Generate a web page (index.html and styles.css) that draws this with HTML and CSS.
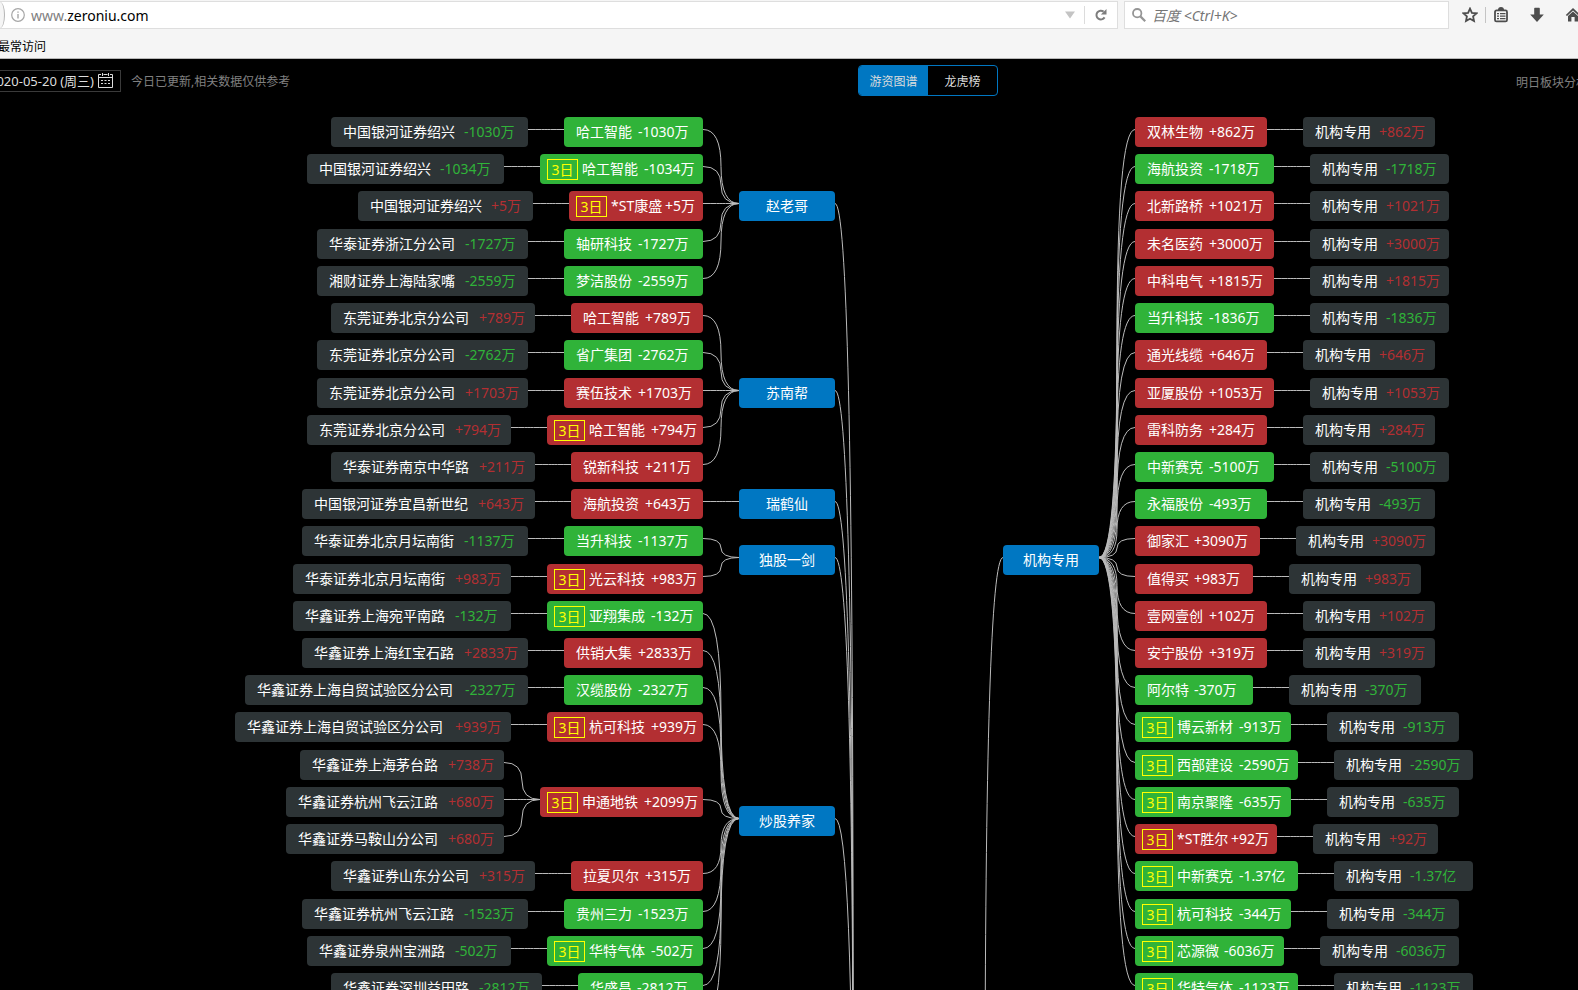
FILE: index.html
```html
<!DOCTYPE html>
<html lang="zh-CN">
<head>
    <meta charset="UTF-8">
    <title>游资图谱</title>
    <link rel="stylesheet" href="styles.css">
</head>
<body>
    <div class="browser">
        <div class="nav-bar">
            <div class="url-bar">
                <span class="back-edge"></span>
                <svg class="info" width="14" height="14" viewBox="0 0 14 14" fill="none" stroke="#a6a6a6">
                    <circle cx="7" cy="7" r="6.3" stroke-width="1.2"/>
                    <path d="M7 6v4.5M7 3.4v1.4" stroke-width="1.4"/>
                </svg>
                <label class="url-prefix" for="url">www.</label>
                <input class="url-input" id="url" type="text" value="zeroniu.com">
                <svg width="10" height="8" viewBox="0 0 10 8"><path d="M0 0.5h10L5 7.5z" fill="#c4c4c4"/></svg>
                <button class="reload" aria-label="刷新">
                    <svg width="12" height="12" viewBox="0 0 12 12">
                        <path d="M9.6 8.4A4.4 4.4 0 1 1 8.6 2.6" fill="none" stroke="#7d7d7d" stroke-width="2"/>
                        <path d="M11.5 0v5.6H5.9z" fill="#7d7d7d"/>
                    </svg>
                </button>
            </div>
            <div class="search-bar">
                <svg width="14" height="14" viewBox="0 0 14 14" fill="none" stroke="#959595">
                    <circle cx="5.2" cy="5.2" r="4.2" stroke-width="1.8"/>
                    <path d="M8.4 8.4l4.8 4.8" stroke-width="2.2"/>
                </svg>
                <input class="search-input" type="text" placeholder="百度 &lt;Ctrl+K&gt;" aria-label="搜索">
            </div>
            <div class="tools">
                <button aria-label="收藏">
                    <svg width="16" height="16" viewBox="0 0 16 16"><path d="M8 1.6l1.9 4.2 4.6.5-3.4 3.1.9 4.6L8 11.7 4 14l.9-4.6L1.5 6.3l4.6-.5z" fill="none" stroke="#4d4d4d" stroke-width="1.8"/></svg>
                </button>
                <span class="divider"></span>
                <button aria-label="书签">
                    <svg width="16" height="16" viewBox="0 0 16 16">
                        <path d="M5 3a3 3 0 0 1 6 0" fill="#4d4d4d"/>
                        <rect x="2" y="3.4" width="12" height="11" rx="1.5" fill="none" stroke="#4d4d4d" stroke-width="1.8"/>
                        <path d="M4 6.6h2M7 6.6h5.5M4 9.1h2M7 9.1h5.5M4 11.6h2M7 11.6h5.5" stroke="#4d4d4d" stroke-width="1.4"/>
                    </svg>
                </button>
                <button class="download" aria-label="下载">
                    <svg width="16" height="16" viewBox="0 0 16 16"><path d="M5.2 1.5q0-.7.7-.7h4.2q.7 0 .7.7v6h4L8 15 1.2 7.500h4z" fill="#4d4d4d"/></svg>
                </button>
                <button aria-label="主页">
                    <svg width="16" height="16" viewBox="0 0 16 16">
                        <path d="M8 1L.8 8l1.2 1L8 3.4 14 9l1.2-1z" fill="#4d4d4d"/>
                        <path d="M3 9l5-4.5L13 9v5.500H9.6V10H6.4v4.500H3z" fill="#4d4d4d"/>
                    </svg>
                </button>
            </div>
        </div>
        <div class="bookmarks"><a href="#">最常访问</a></div>
    </div>

    <header class="page-header">
        <div class="header-left">
            <button class="date">2020-05-20 (周三)
                <svg width="15" height="15" viewBox="0 0 15 15" fill="none" stroke="#ddd">
                    <path d="M3 1.5H.5v13h14v-13H12M5.500 1.500h4M4.500 0v3M10.500 0v3M.5 4.500h14"/>
                    <path d="M3 7.500h2M6.500 7.500h2M10 7.500h2M3 10.500h2M6.500 10.500h2M10 10.500h2"/>
                </svg>
            </button>
            <span class="notice">今日已更新,相关数据仅供参考</span>
        </div>
        <div class="tabs">
            <button class="active">游资图谱</button>
            <button>龙虎榜</button>
        </div>
        <div class="header-right"><a href="#">明日板块分析</a></div>
    </header>

    <main class="map" id="map">
        <svg class="edges" id="edges"></svg>
    </main>
    <script src="map.js"></script>
</body>
</html>
```

FILE: styles.css
```css
*{
    box-sizing: border-box;
}
html, body{
    margin: 0;
    height: 100%;
}
body{
    display: flex;
    flex-direction: column;
    overflow: hidden;
    background: #000;
    font-family: "Noto Sans", "Noto Sans CJK SC", sans-serif;
    font-size: 12px;
}
button, input{
    font: inherit;
    color: inherit;
    border: 0;
    padding: 0;
    margin: 0;
    background: none;
}
a{
    color: inherit;
    text-decoration: none;
}

/* browser bars */
.browser{
    flex: none;
    height: 59px;
    background: #f5f5f5;
    border-bottom: 1px solid #b8b8b8;
    color: #000;
}
.nav-bar{
    display: flex;
    height: 29px;
    padding-top: 1px;
}
.url-bar, .search-bar{
    display: flex;
    align-items: center;
    background: #fff;
    border: 1px solid #dedede;
    font-size: 14px;
}
.url-bar{
    flex: 1;
    border-left: 0;
    margin-right: 6px;

    .back-edge{
        width: 5px;
        height: 26px;
        background: #f5f5f5;
        border-right: 1px solid #b5b5b5;
        border-radius: 0 5px 5px 0 / 0 13px 13px 0;
    }
    .info{
        margin: 0 6px;
    }
    .url-prefix{
        color: #7f7f7f;
    }
    .url-input{
        flex: 1;
        min-width: 0;
    }
    .reload{
        display: flex;
        align-items: center;
        justify-content: center;
        width: 33px;
        height: 18px;
        margin-left: 9px;
        border-left: 1px solid #dcdcdc;
    }
}
.search-bar{
    width: 325px;
    padding: 0 7px;
    gap: 6px;

    .search-input{
        flex: 1;
        min-width: 0;
    }
    .search-input::placeholder{
        color: #757575;
        font-style: italic;
        opacity: 1;
    }
}
.tools{
    display: flex;
    align-items: center;
    width: 129px;
    padding-left: 13px;
    overflow: hidden;

    button{
        flex: none;
        height: 16px;
        margin-right: 20px;
    }
    button:first-child{
        margin-right: 7px;
    }
    .divider{
        flex: none;
        width: 1px;
        height: 16px;
        margin-right: 7px;
        background: #c4c4c4;
    }
}
.bookmarks{
    padding-top: 9px;
    margin-left: -2px;
    line-height: 18px;
}

/* page header */
.page-header{
    flex: none;
    display: grid;
    grid-template-columns: 858fr 140px 580fr;
    align-items: center;
    height: 43px;
}
.header-left{
    display: flex;
    align-items: center;
    gap: 10px;
}
.date{
    display: flex;
    align-items: center;
    justify-content: flex-end;
    gap: 4px;
    width: 141px;
    height: 22px;
    margin-left: -20px;
    padding-right: 7px;
    border: 1px solid #3a3a3a;
    color: #ddd;
    font-size: 13px;
    white-space: nowrap;
}
.notice, .header-right{
    color: #808080;
}
.header-right{
    justify-self: end;
    margin-right: -10px;
    padding-top: 3px;
}
.tabs{
    display: flex;
    height: 31px;
    border: 1px solid #0077c2;
    border-radius: 4px;
    overflow: hidden;
    color: #ddd;

    button{
        flex: 1;
    }
    .active{
        background: #0077c2;
    }
}

/* map */
.map{
    flex: 1;
    position: relative;
    overflow: hidden;
    margin-top: 8px;
}
.edges{
    display: block;
    width: 100%;
    height: 100%;
    fill: none;
    stroke: #bbb;
}
.node{
    position: absolute;
    display: flex;
    align-items: center;
    height: 30px;
    padding-left: 12px;
    border-radius: 4px;
    color: #fff;
    font-size: 14px;
    line-height: 20px;
    white-space: nowrap;
}
.trader{
    justify-content: center;
    padding: 0;
    background: #0077c2;
}
.stock{
    gap: 4px;

    &.up{
        background: #b32f32;
    }
    &.down{
        background: #30b339;
    }
    &.three{
        padding-left: 7px;
    }
    .badge{
        width: 31px;
        height: 21px;
        border: 1px solid #ff0;
        color: #ff0;
        line-height: 20px;
        text-align: center;
    }
}
.broker{
    gap: 6px;
    background: #2d3436;

    &.up .amount{
        color: #b32f32;
    }
    &.down .amount{
        color: #30b339;
    }
}
```

FILE: map.js
```js
const map = document.getElementById('map');
const edges = document.getElementById('edges');

const GAP = 36;
const TRADER_W = 96;
const ROOT = { left: 871, right: 967, y: 1590 };
const LEFT_TRADER = 739;
const RIGHT_TRADER = 1003;

// [stock, amount, 3-day list?, brokers ([name, amount])]
const leftTraders = [
    ['赵老哥', [
        ['哈工智能', '-1030万', false, [['中国银河证券绍兴', '-1030万']]],
        ['哈工智能', '-1034万', true, [['中国银河证券绍兴', '-1034万']]],
        ['*ST康盛', '+5万', true, [['中国银河证券绍兴', '+5万']]],
        ['轴研科技', '-1727万', false, [['华泰证券浙江分公司', '-1727万']]],
        ['梦洁股份', '-2559万', false, [['湘财证券上海陆家嘴', '-2559万']]]
    ]],
    ['苏南帮', [
        ['哈工智能', '+789万', false, [['东莞证券北京分公司', '+789万']]],
        ['省广集团', '-2762万', false, [['东莞证券北京分公司', '-2762万']]],
        ['赛伍技术', '+1703万', false, [['东莞证券北京分公司', '+1703万']]],
        ['哈工智能', '+794万', true, [['东莞证券北京分公司', '+794万']]],
        ['锐新科技', '+211万', false, [['华泰证券南京中华路', '+211万']]]
    ]],
    ['瑞鹤仙', [
        ['海航投资', '+643万', false, [['中国银河证券宜昌新世纪', '+643万']]]
    ]],
    ['独股一剑', [
        ['当升科技', '-1137万', false, [['华泰证券北京月坛南街', '-1137万']]],
        ['光云科技', '+983万', true, [['华泰证券北京月坛南街', '+983万']]]
    ]],
    ['炒股养家', [
        ['亚翔集成', '-132万', true, [['华鑫证券上海宛平南路', '-132万']]],
        ['供销大集', '+2833万', false, [['华鑫证券上海红宝石路', '+2833万']]],
        ['汉缆股份', '-2327万', false, [['华鑫证券上海自贸试验区分公司', '-2327万']]],
        ['杭可科技', '+939万', true, [['华鑫证券上海自贸试验区分公司', '+939万']]],
        ['申通地铁', '+2099万', true, [
            ['华鑫证券上海茅台路', '+738万'],
            ['华鑫证券杭州飞云江路', '+680万'],
            ['华鑫证券马鞍山分公司', '+680万']
        ]],
        ['拉夏贝尔', '+315万', false, [['华鑫证券山东分公司', '+315万']]],
        ['贵州三力', '-1523万', false, [['华鑫证券杭州飞云江路', '-1523万']]],
        ['华特气体', '-502万', true, [['华鑫证券泉州宝洲路', '-502万']]],
        ['华盛昌', '-2812万', false, [['华鑫证券深圳益田路', '-2812万']]],
        ['芯源微', '-1205万', false, [['华鑫证券深圳益田路', '-1205万']]]
    ]]
];

const rightStocks = [
    ['双林生物', '+862万'], ['海航投资', '-1718万'], ['北新路桥', '+1021万'],
    ['未名医药', '+3000万'], ['中科电气', '+1815万'], ['当升科技', '-1836万'],
    ['通光线缆', '+646万'], ['亚厦股份', '+1053万'], ['雷科防务', '+284万'],
    ['中新赛克', '-5100万'], ['永福股份', '-493万'], ['御家汇', '+3090万'],
    ['值得买', '+983万'], ['壹网壹创', '+102万'], ['安宁股份', '+319万'],
    ['阿尔特', '-370万'], ['博云新材', '-913万', true], ['西部建设', '-2590万', true],
    ['南京聚隆', '-635万', true], ['*ST胜尔', '+92万', true], ['中新赛克', '-1.37亿', true],
    ['杭可科技', '-344万', true], ['芯源微', '-6036万', true], ['华特气体', '-1123万', true]
];
const rightTraders = [
    ['机构专用', rightStocks.map(([name, amount, three]) => [name, amount, three, [['机构专用', amount]]])]
];

function rowTop(row) {
    return Math.round(7 + row * 856 / 23);
}

// full-width characters count double
function textWidth(text) {
    let units = 0;
    for (const ch of text) {
        units += ch.charCodeAt(0) > 255 ? 2 : 1;
    }
    return units * 7.2;
}

function nodeWidth(name, amount, three) {
    return Math.round(textWidth(name + ' ' + amount) + 24 + (three ? 24 : 0));
}

function addNode(type, left, row, width, name, amount, three) {
    const node = document.createElement('div');
    node.className = 'node ' + type;
    if (amount) {
        node.classList.add(amount[0] === '+' ? 'up' : 'down');
    }
    node.style.left = left + 'px';
    node.style.top = rowTop(row) + 'px';
    node.style.width = width + 'px';
    if (three) {
        node.classList.add('three');
        addText(node, 'badge', '3日');
    }
    const label = addText(node, 'name', name);
    if (amount) {
        label.style.width = Math.round(textWidth(name)) + 'px';
        addText(node, 'amount', amount);
    }
    map.appendChild(node);
}

function addText(node, cls, text) {
    const span = document.createElement('span');
    span.className = cls;
    span.textContent = text;
    node.appendChild(span);
    return span;
}

// two mirrored quarter curves that meet halfway
function addEdge(x1, y1, x2, y2) {
    const path = document.createElementNS('http://www.w3.org/2000/svg', 'path');
    const midX = (x1 + x2) / 2;
    const midY = (y1 + y2) / 2;
    path.setAttribute('d', `M${x1} ${y1}Q${midX} ${y1} ${midX} ${midY}T${x2} ${y2}`);
    edges.appendChild(path);
}

function lineY(row) {
    return rowTop(row) + 12.5;
}

// dir is -1 for the left half and 1 for the right half
function drawSide(traders, traderLeft, dir) {
    const inner = dir < 0 ? traderLeft + TRADER_W : traderLeft;
    const outer = dir < 0 ? traderLeft : traderLeft + TRADER_W;
    let row = 0;

    traders.forEach(([trader, stocks]) => {
        const count = stocks.reduce((sum, stock) => sum + stock[3].length, 0);
        const traderRow = row + (count - 1) / 2;
        addEdge(inner, lineY(traderRow), dir < 0 ? ROOT.left : ROOT.right, ROOT.y);
        addNode('trader', traderLeft, traderRow, TRADER_W, trader);

        stocks.forEach(([name, amount, three, brokers]) => {
            const width = nodeWidth(name, amount, three);
            const near = outer + dir * GAP;
            const far = near + dir * width;
            const stockRow = row + (brokers.length - 1) / 2;
            addEdge(outer, lineY(traderRow), near, lineY(stockRow));
            addNode('stock', Math.min(near, far), stockRow, width, name, amount, three);

            brokers.forEach(([broker, value]) => {
                const brokerWidth = nodeWidth(broker, value);
                const start = far + dir * GAP;
                addEdge(far, lineY(stockRow), start, lineY(row));
                addNode('broker', dir < 0 ? start - brokerWidth : start, row, brokerWidth, broker, value);
                row++;
            });
        });
    });
}

drawSide(leftTraders, LEFT_TRADER, -1);
drawSide(rightTraders, RIGHT_TRADER, 1);
```
